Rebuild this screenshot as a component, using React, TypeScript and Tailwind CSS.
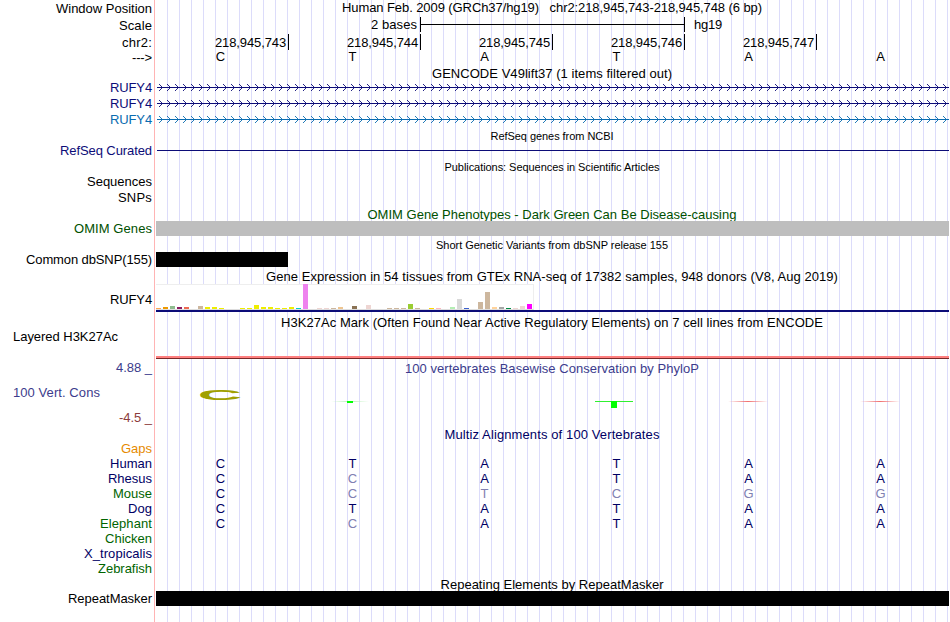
import { useLayoutEffect, useRef, type ReactNode } from "react";
import clsx from "clsx";

/** Single line of text tracked out (or in) so that it fills `width` pixels. */
function Fit({ text, width, className }: { text: string; width: number; className?: string }) {
  const ref = useRef<HTMLSpanElement>(null);
  useLayoutEffect(() => {
    const el = ref.current;
    if (!el) return;
    el.style.letterSpacing = "0px";
    const natural = el.getBoundingClientRect().width;
    el.style.letterSpacing = `${(width - natural) / text.length}px`;
  }, [text, width]);
  return (
    <span ref={ref} className={clsx("inline-block shrink-0 whitespace-pre", className)}>
      {text}
    </span>
  );
}

type Label = { text: string; w: number; h: string; color?: string; left?: boolean };

const navy = "text-[#0c0c78]";
const species = "text-[#000064]";
const green = "text-[#006400]";

const labels: Label[] = [
  { text: "Window Position", w: 96, h: "h-[17px]" },
  { text: "Scale", w: 33, h: "h-[17px]" },
  { text: "chr2:", w: 30, h: "h-[15px]" },
  { text: "--->", w: 20, h: "h-[30px]" },
  { text: "RUFY4", w: 42, h: "h-4", color: navy },
  { text: "RUFY4", w: 42, h: "h-4", color: navy },
  { text: "RUFY4", w: 42, h: "h-[31px]", color: "text-[#0a6cb0]" },
  { text: "RefSeq Curated", w: 92, h: "h-[31px]", color: navy },
  { text: "Sequences", w: 65, h: "h-4" },
  { text: "SNPs", w: 34, h: "h-[31px]" },
  { text: "OMIM Genes", w: 78, h: "h-[31px]", color: "text-[#005000]" },
  { text: "Common dbSNP(155)", w: 126, h: "h-10" },
  { text: "RUFY4", w: 42, h: "h-[37px]" },
  { text: "Layered H3K27Ac", w: 105, h: "h-[31px]", left: true },
  { text: "4.88 _", w: 36, h: "h-[25px]", color: "text-[#3c3c8c]" },
  { text: "100 Vert. Cons", w: 87, h: "h-[25px]", color: "text-[#3c3c8c]", left: true },
  { text: "-4.5 _", w: 33, h: "h-[31px]", color: "text-[#8c3c3c]" },
  { text: "Gaps", w: 31, h: "h-[15px]", color: "text-[#e68a00]" },
  { text: "Human", w: 42, h: "h-[15px]", color: species },
  { text: "Rhesus", w: 44, h: "h-[15px]", color: species },
  { text: "Mouse", w: 39, h: "h-[15px]", color: green },
  { text: "Dog", w: 24, h: "h-[15px]", color: species },
  { text: "Elephant", w: 52, h: "h-[15px]", color: green },
  { text: "Chicken", w: 47, h: "h-[15px]", color: green },
  { text: "X_tropicalis", w: 68, h: "h-[15px]", color: species },
  { text: "Zebrafish", w: 54, h: "h-[30px]", color: green },
  { text: "RepeatMasker", w: 84, h: "h-[15px]" },
];

function Title({ text, w, className, small }: { text: string; w: number; className?: string; small?: boolean }) {
  return (
    <div className={clsx("mr-px flex shrink-0 justify-center", small ? "h-3 text-[11px] leading-[12px]" : "h-[15px]", className)}>
      <Fit text={text} width={w} />
    </div>
  );
}

/** One letter per base; lower case marks a mismatch and is drawn muted. */
function Bases({ seq, className }: { seq: string; className?: string }) {
  return (
    <div className={clsx("-ml-[2px] grid h-[15px] w-[792px] shrink-0 grid-cols-6 text-center", className)}>
      {seq.split("").map((b, i) => (
        <span key={i} className={clsx("pl-px", b === b.toLowerCase() && "text-[#8080b2]")}>
          {b.toUpperCase()}
        </span>
      ))}
    </div>
  );
}

const chevrons = Array.from({ length: 99 }, (_, i) => i * 8);

function Intron({ color }: { color: string }) {
  return (
    <svg className={clsx("ml-px block h-4 w-[792px] shrink-0", color)} viewBox="0 0 792 16">
      <rect x="0" y="7" width="792" height="1" fill="currentColor" />
      {chevrons.map((x) => (
        <path key={x} d={`M${x + 2} 4L${x + 5.5} 7.5L${x + 2} 11`} fill="none" stroke="currentColor" strokeWidth="0.9" />
      ))}
    </svg>
  );
}

const tissues: [number, string][] = [
  [1, "#ffa54f"], [2, "#ee9a00"], [3, "#8fbc8f"], [2, "#8b1c62"], [2, "#ee6a50"], [0, ""],
  [3, "#cdb79e"], [2, "#eeee00"], [2, "#eeee00"], [1, "#eeee00"], [0, ""], [0, ""],
  [1, "#eeee00"], [1, "#eeee00"], [4, "#eeee00"], [2, "#eeee00"], [2, "#eeee00"], [1, "#eeee00"],
  [1, "#eeee00"], [2, "#eeee00"], [1, "#00cdcd"], [25, "#ee82ee"], [0, ""], [1, "#eed5d2"],
  [1, "#eed5d2"], [1, "#cdb79e"], [2, "#eec591"], [0, ""], [3, "#8b7355"], [0, ""],
  [4, "#eed5d2"], [0, ""], [0, ""], [1, "#cdb79e"], [1, "#cdb79e"], [1, "#cdb79e"],
  [5, "#9acd32"], [1, "#cdb79e"], [0, ""], [1, "#ffd700"], [1, "#ffb6c1"], [0, ""],
  [2, "#b4eeb4"], [10, "#d9d9d9"], [1, "#3a5fcd"], [0, ""], [7, "#cdb79e"], [17, "#cdb79e"],
  [2, "#ffd39b"], [2, "#a6a6a6"], [1, "#008b45"], [1, "#eed5d2"], [3, "#eed5d2"], [5, "#ff00ff"],
];

function Expression() {
  return (
    <div className="flex h-[26px] w-[378px] shrink-0 items-end gap-[2px] border-t border-r border-b border-[#eee] border-b-[#ddd] bg-white">
      {tissues.map(([h, c], i) => (
        <span key={i} className="-mt-1 w-[5px] shrink-0" style={{ height: h, backgroundColor: c }} />
      ))}
    </div>
  );
}

function Spacer({ className, children }: { className: string; children?: ReactNode }) {
  return <div className={clsx("shrink-0", className)}>{children}</div>;
}

function Conservation() {
  return (
    <div className="relative h-[51px] shrink-0">
      <span className="absolute top-[10px] left-[54px] w-5 origin-center scale-x-[4.1] text-center text-[15px] leading-[17px] font-bold text-[#a0a000]">
        C
      </span>
      <div className="absolute top-[25px] left-[175px] h-px w-[38px] bg-linear-to-r from-transparent via-[#b8f0b8] to-transparent" />
      <div className="absolute top-[25px] left-[191px] h-[2px] w-[6px] bg-[#00ff00]" />
      <div className="absolute top-[25px] left-[439px] h-px w-[38px] bg-[#30f030]" />
      <div className="absolute top-[25px] left-[455px] h-[7px] w-[6px] bg-[#00ff00]" />
      <div className="absolute top-[25px] left-[572px] h-px w-10 bg-linear-to-r from-transparent via-[#f07070] to-transparent" />
      <div className="absolute top-[25px] left-[704px] h-px w-10 bg-linear-to-r from-transparent via-[#f07070] to-transparent" />
    </div>
  );
}

const positions = ["218,945,743", "218,945,744", "218,945,745", "218,945,746", "218,945,747"];

export default function App() {
  return (
    <div className="flex h-[622px] w-[950px] overflow-hidden bg-white font-['Liberation_Sans',Arial,sans-serif] text-[13px] leading-[15px] text-black">
      <aside className="flex w-[155px] shrink-0 flex-col border-r border-[#ffb4b4] pt-px">
        {labels.map((l, i) => (
          <div key={i} className={clsx("flex shrink-0", l.h, l.color, l.left ? "justify-start pl-[13px]" : "justify-end pr-[2px]")}>
            <Fit text={l.text} width={l.w} />
          </div>
        ))}
      </aside>

      <main className="ml-px flex w-[793px] shrink-0 flex-col bg-[linear-gradient(to_right,#dcdcfa_1px,transparent_1px)] bg-[length:12px_100%] bg-[position:11px_0]">
        <Title text={"Human Feb. 2009 (GRCh37/hg19)   chr2:218,945,743-218,945,748 (6 bp)"} w={420} />
        <div className="mt-[2px] flex h-[15px] shrink-0 pl-[215px]">
          <Fit text="2 bases" width={46} />
          <div className="ml-[3px] flex w-[265px] items-center border-x border-black">
            <div className="h-px w-full bg-black" />
          </div>
          <Fit text="hg19" width={28} className="ml-[9px]" />
        </div>
        <div className="mt-[2px] grid h-[15px] w-[793px] shrink-0 grid-cols-[repeat(6,132px)] pl-px">
          {positions.map((p) => (
            <div key={p} className="flex justify-end border-r border-black pt-px pr-[2px]">
              <Fit text={p} width={71} />
            </div>
          ))}
        </div>
        <Bases seq="CTATAA" />
        <Title text="GENCODE V49lift37 (1 items filtered out)" w={240} className="mt-[2px] -mb-px" />
        <Intron color="text-[#0c0c78]" />
        <Intron color="text-[#0c0c78]" />
        <Intron color="text-[#0a6cb0]" />
        <Title small text="RefSeq genes from NCBI" w={123} className="mt-[2px]" />
        <Spacer className="mt-2 ml-px h-px bg-[#0c0c78]" />
        <Title small text="Publications: Sequences in Scientific Articles" w={215} className="mt-[10px]" />
        <Title text="OMIM Gene Phenotypes - Dark Green Can Be Disease-causing" w={369} className="mt-[34px] -mb-px text-[#005000]" />
        <Spacer className="z-10 h-[15px] bg-[#bebebe]" />
        <Title small text="Short Genetic Variants from dbSNP release 155" w={232} className="mt-[3px]" />
        <Spacer className="mt-px h-[15px] w-[132px] bg-black" />
        <Title text="Gene Expression in 54 tissues from GTEx RNA-seq of 17382 samples, 948 donors (V8, Aug 2019)" w={572} className="mt-[2px]" />
        <Expression />
        <Spacer className="h-[2px] bg-[#0c0c78]" />
        <Title text="H3K27Ac Mark (Often Found Near Active Regulatory Elements) on 7 cell lines from ENCODE" w={542} className="mt-[3px]" />
        <Spacer className="mt-[26px] h-[3px] border-b border-[#782828] bg-[#ff8080]" />
        <Title text="100 vertebrates Basewise Conservation by PhyloP" w={294} className="mt-[2px] text-[#3c3c8c]" />
        <Conservation />
        <Title text="Multiz Alignments of 100 Vertebrates" w={215} className="text-[#000064]" />
        <Spacer className="h-[14px]" />
        {["CTATAA", "CcATAA", "Cctcgg", "CTATAA", "CcATAA"].map((s, i) => (
          <Bases key={i} seq={s} className="text-[#000064]" />
        ))}
        <Title text="Repeating Elements by RepeatMasker" w={223} className="mt-[46px]" />
        <Spacer className="-mt-px h-[15px] bg-black" />
      </main>
    </div>
  );
}
